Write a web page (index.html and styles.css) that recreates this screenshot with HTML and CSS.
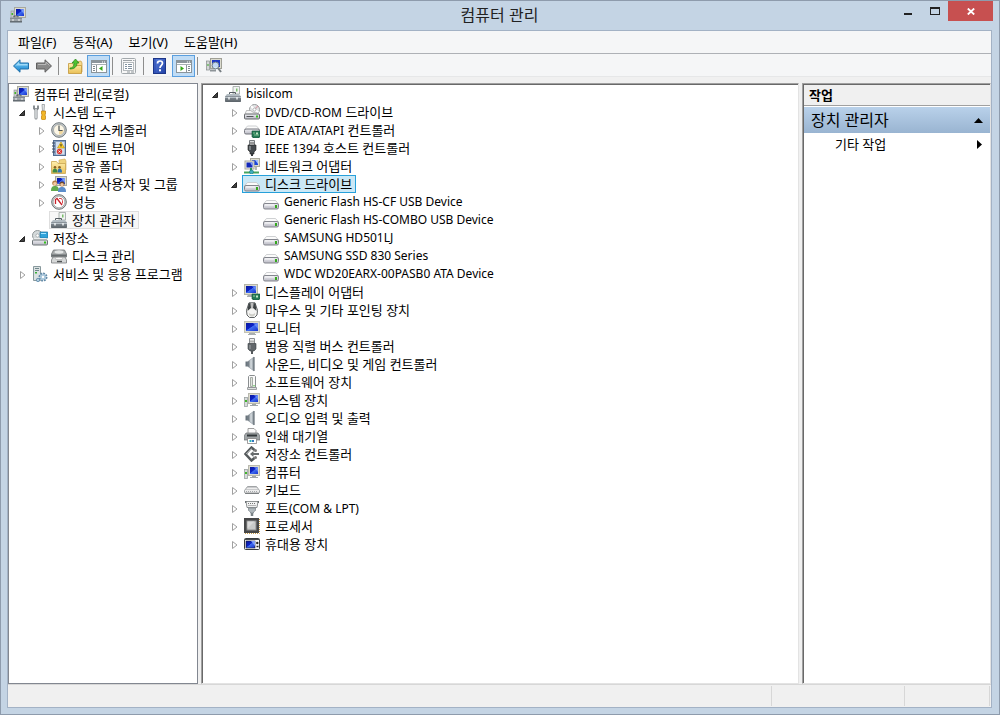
FILE: index.html
```html
<!DOCTYPE html>
<html lang="ko">
<head>
<meta charset="utf-8">
<title>컴퓨터 관리</title>
<link rel="stylesheet" href="styles.css">
</head>
<body>
<svg class="sprite" aria-hidden="true">
  <defs>
    <linearGradient id="g-screen" x1="0" y1="0" x2="1" y2="1">
      <stop offset="0" stop-color="#0a1a9c"/><stop offset=".45" stop-color="#0c22c8"/><stop offset=".5" stop-color="#3f6df0"/><stop offset="1" stop-color="#1a35d0"/>
    </linearGradient>
    <linearGradient id="g-metal" x1="0" y1="0" x2="0" y2="1"><stop offset="0" stop-color="#eeeef2"/><stop offset="1" stop-color="#b9b9c3"/></linearGradient>
    <linearGradient id="g-dark" x1="0" y1="0" x2="0" y2="1"><stop offset="0" stop-color="#8f979e"/><stop offset="1" stop-color="#5a6268"/></linearGradient>
    <linearGradient id="g-folder" x1="0" y1="0" x2="0" y2="1"><stop offset="0" stop-color="#fff0b0"/><stop offset="1" stop-color="#e9bf55"/></linearGradient>
    <linearGradient id="g-blue" x1="0" y1="0" x2="0" y2="1"><stop offset="0" stop-color="#7fd0f8"/><stop offset="1" stop-color="#1583cf"/></linearGradient>
    <linearGradient id="g-speaker" x1="0" y1="0" x2="1" y2="0"><stop offset="0" stop-color="#59636b"/><stop offset=".5" stop-color="#dbe1e5"/><stop offset="1" stop-color="#77828a"/></linearGradient>
    <linearGradient id="g-help" x1="0" y1="0" x2="1" y2="1"><stop offset="0" stop-color="#5b80dc"/><stop offset="1" stop-color="#1e3fa5"/></linearGradient>
  </defs>

  <symbol id="i-monitor" viewBox="0 0 16 16">
    <path d="M5 12h6v2h1v1H4v-1h1z" fill="#a9aeb0"/>
    <rect x=".5" y="1.500" width="15" height="11" fill="#dcdccf" stroke="#c3c3b6"/>
    <rect x="2" y="3" width="12" height="8" fill="url(#g-screen)"/>
    <path d="M9 3h5v6z" fill="#7fa0fa" opacity=".6"/>
  </symbol>
  <symbol id="i-computer" viewBox="0 0 16 16">
    <rect x=".5" y="5.500" width="3" height="9" fill="#d9dcdc" stroke="#9ba2a2" stroke-width=".8"/>
    <rect x="1" y="8" width="2" height="2" fill="#42b52a"/>
    <path d="M8 11h4v2h2v1H6v-1h2z" fill="#a0a6a8"/>
    <rect x="4.500" y="1.500" width="11" height="10" fill="#dcdccf" stroke="#b9b9ae"/>
    <rect x="6" y="3" width="8" height="7" fill="url(#g-screen)"/>
    <path d="M10 3h4v5z" fill="#7fa0fa" opacity=".6"/>
  </symbol>
  <symbol id="i-manage" viewBox="0 0 16 16">
    <rect x="1" y="4" width="3" height="8" fill="#c7cbcb" stroke="#8a9090" stroke-width=".6"/>
    <rect x="1.500" y="6" width="1.500" height="2" fill="#42b52a"/>
    <rect x="4.500" y=".5" width="11" height="10" fill="#dcdccf" stroke="#a8a89e"/>
    <rect x="6" y="2" width="8" height="7" fill="url(#g-screen)"/>
    <path d="M10 2h4v5z" fill="#8fb0ff" opacity=".7"/>
    <path d="M4 10.500V9h4v1.500" fill="none" stroke="#50575c"/>
    <rect x="0" y="10.500" width="12" height="5" rx=".5" fill="url(#g-dark)"/>
    <path d="M0 13h12" stroke="#dadfe2" stroke-width=".8"/>
    <path d="M3 12v2M9 12v2" stroke="#f3f3f3"/>
  </symbol>
  <symbol id="i-toolbox" viewBox="0 0 16 16">
    <path d="M8 8V.5h6.500V8z" fill="#f1f3f2" stroke="#9ba2a0" stroke-width=".8"/>
    <rect x="11" y="2.500" width="1.500" height="3" fill="#7dbf6c"/>
    <path d="M4.500 8.500V6.500h6v2" fill="none" stroke="#555d63"/>
    <path d="M2 8h12l2 2.500H0z" fill="#b3bcc2"/>
    <rect x="0" y="10" width="16" height="6" rx=".7" fill="url(#g-dark)"/>
    <path d="M0 11.500h16" stroke="#c5ced4" stroke-width=".8"/>
    <path d="M4 11v2.500M12 11v2.500" stroke="#eef1f2" stroke-width="1.500"/>
  </symbol>
  <symbol id="i-tools" viewBox="0 0 16 16">
    <path d="M2 1.500v3l2 1.500 2-1.500v-3" fill="none" stroke="#7d8387" stroke-width="1.800"/>
    <path d="M4 5.500V14" stroke="#80868a" stroke-width="3" stroke-linecap="round"/>
    <path d="M4 5.500V14" stroke="#e9ebec" stroke-width="1.400" stroke-linecap="round"/>
    <path d="M10 .5h2.500L12 7h-1.500z" fill="#e9ebec" stroke="#888e91" stroke-width=".7"/>
    <path d="M9.500 7h4v3l-.7 1 .7 1v3l-1 1h-2l-1-1v-3l.7-1-.7-1z" fill="#f2b727" stroke="#bd7c0b" stroke-width=".7"/>
  </symbol>
  <symbol id="i-clock" viewBox="0 0 16 16">
    <circle cx="8" cy="8" r="7.300" fill="#c5cacc" stroke="#70787b"/>
    <circle cx="8" cy="8" r="5.500" fill="#fdf7e6" stroke="#92989a" stroke-width=".7"/>
    <path d="M8 8h4.500A4.500 4.500 0 0 1 8 12.500z" fill="#efd79d"/>
    <path d="M8 3.500V8.500h3.500" fill="none" stroke="#4e5558" stroke-width="1.200"/>
  </symbol>
  <symbol id="i-event" viewBox="0 0 16 16">
    <rect x="2.500" y=".5" width="12" height="15" fill="#8aa2c3" stroke="#516c93"/>
    <rect x="5" y="2" width="8.500" height="12.500" fill="#d5e0ef"/>
    <path d="M1 3h3M1 6h3M1 9h3M1 12h3" stroke="#404d60"/>
    <path d="M10 2l3.500 6h-7z" fill="#ffd22e" stroke="#b98d00" stroke-width=".6"/>
    <path d="M10 4v2.500" stroke="#222"/>
    <circle cx="8.500" cy="11.500" r="2.700" fill="#dc3a36"/>
    <path d="M7.500 10.500l2 2m0-2l-2 2" stroke="#fff" stroke-width=".8"/>
  </symbol>
  <symbol id="i-share" viewBox="0 0 16 16">
    <path d="M8 2l6-1 1 2v9H8z" fill="#f0d47f" stroke="#c9a651" stroke-width=".6"/>
    <path d="M.5 3.500h5l1.500 2h7.500v10H.5z" fill="url(#g-folder)" stroke="#c9a651" stroke-width=".8"/>
    <circle cx="4" cy="9.300" r="1.300" fill="#8b6023"/><circle cx="8.500" cy="9.300" r="1.300" fill="#8b6023"/>
    <path d="M1.500 14.500c0-3 1-4 2.500-4s2.300 1 2.300 4z" fill="#3f8a44"/>
    <path d="M6.500 14.500c0-3 .8-4 2.200-4s2.300 1 2.300 4z" fill="#2f75b0"/>
  </symbol>
  <symbol id="i-users" viewBox="0 0 16 16">
    <rect x="4.500" y=".5" width="11" height="9" fill="#dcdccf" stroke="#a8a89e"/>
    <rect x="6" y="2" width="8" height="6" fill="url(#g-screen)"/>
    <path d="M10 2h4v5z" fill="#8fb0ff" opacity=".7"/>
    <circle cx="3.800" cy="7" r="2.600" fill="#b57d46"/><circle cx="4" cy="7.700" r="1.800" fill="#f1c9a2"/>
    <path d="M0 15c0-4 1.500-5 4-5s4 1 4 5z" fill="#61a94e"/>
    <circle cx="11" cy="8" r="2.500" fill="#6f4a2b"/><circle cx="11" cy="8.800" r="1.800" fill="#efc59e"/>
    <path d="M7 16c0-4 1.500-5 4-5s4 1 4 5z" fill="#5c8dcb"/>
  </symbol>
  <symbol id="i-perf" viewBox="0 0 16 16">
    <circle cx="8" cy="8" r="7.300" fill="#d2d4d5" stroke="#6b7173"/>
    <circle cx="8" cy="8" r="5.800" fill="#fff" stroke="#8b9092" stroke-width=".6"/>
    <path d="M4.500 10V5.500L6 4.500l5 6.500" fill="none" stroke="#c9222b" stroke-width="1.300"/>
    <path d="M8 4.500h2.500l1 2v3" fill="none" stroke="#d9484e"/>
  </symbol>
  <symbol id="i-storage" viewBox="0 0 16 16">
    <circle cx="5.500" cy="5.500" r="5" fill="#d5dadb" stroke="#8e9697"/>
    <circle cx="5.500" cy="5.500" r="1.600" fill="#fff" stroke="#8e9697" stroke-width=".6"/>
    <rect x="8" y="2" width="8" height="6" rx=".7" fill="#30a3da" stroke="#176b98" stroke-width=".7"/>
    <path d="M9 3.500h5" stroke="#a7e4ff"/>
    <path d="M2 8h12l2 2.500H0z" fill="#eceeee"/>
    <rect x=".5" y="10" width="15" height="5" rx="1" fill="url(#g-metal)" stroke="#6c7477"/>
    <rect x="12" y="11.500" width="2" height="2" fill="#32c21b"/>
  </symbol>
  <symbol id="i-diskmgmt" viewBox="0 0 16 16">
    <path d="M2.500 2h11l2 4v3H.5V6z" fill="#a9acad" stroke="#707476" stroke-width=".8"/>
    <ellipse cx="8" cy="4" rx="4.500" ry="1.700" fill="#e3e5e5"/>
    <path d="M.5 6.500h15v2H.5z" fill="#676c6e"/>
    <path d="M2 9h12l1.500 3v3H.5v-3z" fill="#d6d8d8" stroke="#787c7e" stroke-width=".8"/>
    <ellipse cx="8" cy="10.500" rx="4" ry="1.200" fill="#f9f9f9" stroke="#999" stroke-width=".5"/>
    <path d="M6 13.500h5" stroke="#4f5355" stroke-width="1.400"/>
  </symbol>
  <symbol id="i-services" viewBox="0 0 16 16">
    <path d="M1.500.5h7v14h-7z" fill="#dbe1e2" stroke="#88999d"/>
    <path d="M3 2.500h4M3 4.500h4" stroke="#70878b"/><rect x="3" y="6" width="2" height="1.500" fill="#38af38"/>
    <circle cx="11" cy="11" r="3.500" fill="#d6e6f0" stroke="#628aa8" stroke-width="2" stroke-dasharray="1.800 .9"/>
    <circle cx="11" cy="11" r="2.800" fill="#a9c7dc"/><circle cx="11" cy="11" r="1.200" fill="#fff"/>
    <circle cx="6" cy="14" r="1.700" fill="#aecbdd" stroke="#608aaa" stroke-width=".8"/>
  </symbol>
  <symbol id="i-drive" viewBox="0 0 16 16">
    <path d="M3.500 6.500h9l3 3.500H.5z" fill="#fbfbfb" stroke="#c3c5c8" stroke-width=".8"/>
    <rect x=".5" y="9.500" width="15" height="5.500" rx="1.500" fill="url(#g-metal)" stroke="#84868e"/>
    <path d="M2 11h9" stroke="#fff" stroke-width=".8"/>
    <rect x="12" y="11" width="2" height="3" fill="#34a81d"/>
  </symbol>
  <symbol id="i-dvd" viewBox="0 0 16 16">
    <circle cx="10.500" cy="5.500" r="5" fill="#e2e4e5" stroke="#96999b"/>
    <path d="M10.500 5.500L7 2M10.500 5.500l4 3" stroke="#fff" stroke-width="1.800"/>
    <path d="M10.500 5.500L14 2" stroke="#d9a7b1" stroke-width="1.300"/>
    <circle cx="10.500" cy="5.500" r="1.500" fill="#fff" stroke="#9b9ea0" stroke-width=".7"/>
    <path d="M2.500 6.500h4l3 2 4 .5 2 2H.5z" fill="#f5f5f5" stroke="#999" stroke-width=".6"/>
    <rect x=".5" y="10" width="15" height="5" rx="1" fill="url(#g-metal)" stroke="#65686b"/>
    <path d="M2.500 12.500h7" stroke="#54575a"/><rect x="12" y="11.500" width="2" height="2" fill="#34bf1d"/>
  </symbol>
  <symbol id="i-ide" viewBox="0 0 16 16">
    <path d="M3.500 4h9l3 3.500H.5z" fill="#fbfbfb" stroke="#c3c5c8" stroke-width=".8"/>
    <rect x=".5" y="7" width="15" height="5" rx="1.500" fill="url(#g-metal)" stroke="#73757d"/>
    <path d="M8 9h8v6h-1v1h-6v-1H8z" fill="#277b57" stroke="#115237" stroke-width=".6"/>
    <rect x="12" y="10.500" width="2" height="2" fill="#bfe5c3"/><path d="M9 11h2m-1 2h5" stroke="#92cf9d" stroke-width=".8"/>
  </symbol>
  <symbol id="i-ieee" viewBox="0 0 16 16">
    <path d="M5.500.5h5v5h-5z" fill="#d9dbdc" stroke="#777b7e"/>
    <path d="M7 2v2M9 2v2" stroke="#555"/>
    <path d="M4 5h8v5l-2 2v2H6v-2l-2-2z" fill="#454a4e" stroke="#222" stroke-width=".6"/>
    <path d="M6 6v4" stroke="#adb2b5"/><path d="M8 13v3" stroke="#33373a" stroke-width="2"/>
  </symbol>
  <symbol id="i-usb" viewBox="0 0 16 16">
    <path d="M5.500.5h5V6h-5z" fill="#edeeee" stroke="#8b8f92"/>
    <path d="M7 2.500v2M9 2.500v2" stroke="#777"/>
    <path d="M4 5.500h8V11l-2 2H6l-2-2z" fill="#62676b" stroke="#3b4043" stroke-width=".6"/>
    <path d="M6 7v4" stroke="#9fa4a7"/><path d="M8 13v3" stroke="#55595c" stroke-width="2"/>
  </symbol>
  <symbol id="i-network" viewBox="0 0 16 16">
    <rect x="6.500" y=".5" width="9" height="8" fill="#dcdccf" stroke="#aaaa9f"/><rect x="8" y="2" width="6" height="5" fill="#1c45d9"/>
    <path d="M11 2h3v4z" fill="#9cbcff"/>
    <rect x="1" y="3" width="9" height="8" fill="#ebebe2" stroke="#aaaa9f"/><rect x="2.500" y="4.500" width="6" height="5" fill="#1327b9"/>
    <path d="M6 4.500h2.500v4z" fill="#7d9efb"/>
    <path d="M7 10v4" stroke="#2b9a56" stroke-width="2"/><path d="M0 14.500h15" stroke="#47a55f" stroke-width="2"/>
    <circle cx="7.500" cy="14" r="2" fill="#43aebe" stroke="#167b7c" stroke-width=".6"/>
    <path d="M12 9v3" stroke="#b6b9b6" stroke-width="2"/>
  </symbol>
  <symbol id="i-display" viewBox="0 0 16 16">
    <path d="M4 11h4v2H3v-1z" fill="#a9aeb0"/>
    <rect x=".5" y=".5" width="13" height="10" fill="#dcdccf" stroke="#b5b5a8"/>
    <rect x="2" y="2" width="10" height="7" fill="url(#g-screen)"/><path d="M8 2h4v5z" fill="#7fa0fa" opacity=".6"/>
    <path d="M8 10h8v5h-1v1h-6v-1H8z" fill="#277b57" stroke="#115237" stroke-width=".6"/>
    <rect x="12" y="11.500" width="2" height="2" fill="#c1e9c5"/><path d="M9 12h2" stroke="#92cf9d"/>
  </symbol>
  <symbol id="i-mouse" viewBox="0 0 16 16">
    <path d="M5 .8h6l2.500 7.500L13 13l-2.500 2.500h-5L3 13l-.5-4.700z" fill="#f4f4f2" stroke="#5f6364"/>
    <path d="M4.500 1.500L6.500 1l.5 5-3.500 3zM11.500 1.500L9.500 1 9 6l3.500 3z" fill="#3d4244"/>
    <path d="M8 1.500v5" stroke="#aaa" stroke-width="1.500"/>
    <path d="M5 11q3 2.500 6 0v2L9 14.500H7L5 13z" fill="#cfcfc9"/>
  </symbol>
  <symbol id="i-sound" viewBox="0 0 16 16">
    <path d="M1.500 5.500h3v5h-3z" fill="#6a757d"/>
    <path d="M4 5.500L10 1v14l-6-4.500z" fill="url(#g-speaker)" stroke="#8c969d" stroke-width=".6"/>
    <path d="M10 1v14" stroke="#667077"/>
  </symbol>
  <symbol id="i-soft" viewBox="0 0 16 16">
    <path d="M4.500 2.500l1-1h5l1 1v11h-7z" fill="#fafafa" stroke="#8a8e90"/>
    <path d="M6.500 3.500v9h2v-9z" fill="#dfe5de" stroke="#8a9189" stroke-width=".7"/>
    <path d="M3.500 13.500h9v2h-9z" fill="#dfe0e0" stroke="#8a8e90" stroke-width=".8"/>
    <rect x="9.500" y="11" width="1" height="1.500" fill="#35b826"/>
  </symbol>
  <symbol id="i-printer" viewBox="0 0 16 16">
    <path d="M4 6V.5h6l2 2V6z" fill="#fafafa" stroke="#888" stroke-width=".8"/>
    <path d="M2 5h12l2 3v4H0V8z" fill="#a0a5a7" stroke="#6a6f71" stroke-width=".7"/>
    <path d="M3 7.500h10" stroke="#33383b" stroke-width="2"/>
    <path d="M3.500 10.500h9v5h-9z" fill="#fff" stroke="#777" stroke-width=".7"/>
    <path d="M5.500 12h2v2h-2z" fill="#2eb0ba"/><path d="M8 12h2v2H8z" fill="#3578c1"/>
  </symbol>
  <symbol id="i-controller" viewBox="0 0 16 16">
    <path d="M10.500 4L7.500 1.500 1.500 8l6 6.500 3-2.500" fill="none" stroke="#555a5c" stroke-width="2.500"/>
    <path d="M2 8l5.500-5.500" stroke="#a3a7a8"/>
    <path d="M8 8h7" stroke="#666b6d" stroke-width="2"/><path d="M6 8l3.500-3v6z" fill="#666b6d"/>
    <circle cx="11.500" cy="4.500" r="1.500" fill="#777"/><circle cx="11.500" cy="11.500" r="1.500" fill="#777"/>
  </symbol>
  <symbol id="i-keyboard" viewBox="0 0 16 16">
    <path d="M3.500 4.500h9l3 4v2l-1 1h-13l-1-1v-2z" fill="#ededed" stroke="#8b8f92" stroke-width=".8"/>
    <path d="M3.500 5.500h9M2.500 7.500h11.500M2 9.500h12" stroke="#a6a9ac" stroke-dasharray="1 1"/>
    <path d="M1 11.200h14" stroke="#6b6f72"/>
  </symbol>
  <symbol id="i-port" viewBox="0 0 16 16">
    <path d="M1 2h2M13 2h2" stroke="#6c7174" stroke-width="2"/>
    <path d="M2 1.500h12l-1 6H3z" fill="#f1f2f2" stroke="#73787a" stroke-width=".8"/>
    <path d="M4 3.500h8M4.500 5.500h7" stroke="#777" stroke-dasharray="1 1"/>
    <path d="M4.500 8h7v2.500l-2 1.500v1h-3v-1l-2-1.500z" fill="#b0b8bc" stroke="#788186" stroke-width=".7"/>
    <path d="M8 13v3" stroke="#798286" stroke-width="2.500"/>
  </symbol>
  <symbol id="i-cpu" viewBox="0 0 16 16">
    <path d="M1 15.500h14.500V1" fill="none" stroke="#c69c4b" stroke-dasharray="1 1"/>
    <rect x="0" y="0" width="15" height="15" fill="#464748"/>
    <rect x="3" y="3" width="9" height="9" fill="#c9cac9" stroke="#8d8e8d"/>
    <path d="M3.500 3.500h7l-7 7z" fill="#dadada"/>
  </symbol>
  <symbol id="i-portable" viewBox="0 0 16 16">
    <rect x=".5" y="2.500" width="15" height="11" rx="1" fill="#fbfbfb" stroke="#393d3f"/>
    <rect x="2" y="5" width="9" height="7" fill="url(#g-screen)" stroke="#15182d" stroke-width=".6"/>
    <path d="M7 5h4v5z" fill="#7d9dfa"/><path d="M1 3.500h14" stroke="#464a4c"/>
    <circle cx="13.300" cy="7" r="1.200" fill="#222"/><path d="M12.500 10.500h2" stroke="#222" stroke-width="1.500"/>
  </symbol>
  <symbol id="i-back" viewBox="0 0 16 16">
    <path d="M.5 8L7 1.800V5h8.500v6H7v3.200z" fill="url(#g-blue)" stroke="#1f6fa8"/>
    <path d="M2 8l4-3.800V6h8.500v1.500H3z" fill="#bce9ff" opacity=".7"/>
  </symbol>
  <symbol id="i-forward" viewBox="0 0 16 16">
    <path d="M15.500 8L9 1.800V5H.5v6H9v3.200z" fill="#898989" stroke="#606060"/>
    <path d="M2 6.500h8V4l3.500 3.500" fill="none" stroke="#b9b9b9"/>
  </symbol>
  <symbol id="i-up" viewBox="0 0 16 16">
    <path d="M8 4l6-1 1 2v9H8z" fill="#f5d98a" stroke="#c59b3f" stroke-width=".7"/>
    <path d="M1.500 5.500h4l1.500 2h7.500v8h-13z" fill="url(#g-folder)" stroke="#c29638" stroke-width=".8"/>
    <path d="M3 10c3 0 4-2 4-5H5l3.500-4L12 5h-2c0 4-3 6-7 6z" fill="#4fc232" stroke="#278219" stroke-width=".7"/>
  </symbol>
  <symbol id="i-panel" viewBox="0 0 16 16">
    <rect x=".5" y="2.500" width="15" height="12" fill="#fff" stroke="#8b959b"/>
    <path d="M1 3h14v2H1z" fill="#8b959c"/><path d="M11 4h1m1 0h1" stroke="#fff"/>
    <path d="M1 6.500h14" stroke="#a8b0b5"/>
    <path d="M5.500 7v7" stroke="#8b959b"/><path d="M2 8.500h2M2 10.500h2M2 12.500h2" stroke="#7d8890"/>
    <path d="M11.500 8v5L8 10.500z" fill="#35a718"/>
  </symbol>
  <symbol id="i-actions" viewBox="0 0 16 16">
    <rect x=".5" y="2.500" width="15" height="12" fill="#fff" stroke="#8b959b"/>
    <path d="M1 3h14v2H1z" fill="#8b959c"/><path d="M11 4h1m1 0h1" stroke="#fff"/>
    <path d="M1 6.500h14" stroke="#a8b0b5"/>
    <path d="M10.500 7v7" stroke="#8b959b"/><path d="M12 8.500h2M12 10.500h2M12 12.500h2" stroke="#7d8890"/>
    <path d="M4.500 8v5L8 10.500z" fill="#35a718"/>
  </symbol>
  <symbol id="i-props" viewBox="0 0 16 16">
    <rect x=".5" y=".5" width="14" height="15" rx="1" fill="#f7f7f7" stroke="#a2a8ac"/>
    <path d="M2 2.500h9M12 2.500h1.500" stroke="#9ca2a6"/>
    <rect x="2.500" y="4.500" width="10" height="8" fill="#fff" stroke="#a5abae" stroke-width=".8"/>
    <path d="M4 6.500h2M7 6.500h4M4 8.500h2M7 8.500h4M4 10.500h2M7 10.500h4" stroke="#8292a0"/>
    <path d="M6 14h3m1 0h3" stroke="#8d959a"/>
  </symbol>
  <symbol id="i-help" viewBox="0 0 16 16">
    <rect x="1.500" y=".5" width="12" height="15" fill="url(#g-help)" stroke="#1c3688"/>
    <path d="M3 1v14" stroke="#2a4bb0"/>
    <path d="M5.500 5.500C5.500 3.500 6.800 3 8 3c1.500 0 2.500 1 2.500 2.300C10.500 7.300 8 7.300 8 10" fill="none" stroke="#fff" stroke-width="1.700"/>
    <rect x="7" y="11.300" width="2" height="2" fill="#fff"/>
  </symbol>
  <symbol id="i-scan" viewBox="0 0 16 16">
    <rect x=".5" y="3" width="3" height="9" fill="#d5d8d8" stroke="#858b8b" stroke-width=".7"/><path d="M1 7h2" stroke="#36a925"/>
    <rect x="4.500" y=".5" width="11" height="10" fill="#dcdccf" stroke="#a0a096"/>
    <rect x="6" y="2" width="8" height="7" fill="#1f3ac4"/><path d="M4 12.500h6" stroke="#8d9498" stroke-width="2"/>
    <circle cx="9.500" cy="7.500" r="3.400" fill="#d4eafa" fill-opacity=".9" stroke="#74818c"/>
    <path d="M12 10l3 4" stroke="#777e83" stroke-width="2"/>
  </symbol>
  <symbol id="i-open" viewBox="0 0 8 8"><path d="M6.500 1.500v5h-5z" fill="#404040" stroke="#262626"/></symbol>
  <symbol id="i-closed" viewBox="0 0 8 8"><path d="M2.500.5L7 4 2.500 7.500z" fill="#fff" stroke="#a0a0a0"/></symbol>
</svg>

<div class="window">
  <header class="titlebar">
    <svg class="icon titlebar-icon"><use href="#i-manage"/></svg>
    <h1 class="title">컴퓨터 관리</h1>
    <div class="window-controls">
      <button class="win-btn" aria-label="최소화"><svg width="10" height="10"><path d="M1 7h8v2H1z" fill="#222"/></svg></button>
      <button class="win-btn" aria-label="최대화"><svg width="10" height="8"><path d="M0 0h10v8H0zM1 2v5h8V2z" fill="#222" fill-rule="evenodd"/></svg></button>
      <button class="win-btn win-close" aria-label="닫기"><svg width="8" height="7"><path d="M.8.5l6.400 6M7.200.5l-6.400 6" stroke="#fff" stroke-width="1.800"/></svg></button>
    </div>
  </header>

  <div class="client">
    <nav class="menubar" aria-label="메뉴">
      <button class="menu">파일(F)</button>
      <button class="menu">동작(A)</button>
      <button class="menu">보기(V)</button>
      <button class="menu">도움말(H)</button>
    </nav>

    <div class="toolbar" role="toolbar" aria-label="도구 모음">
      <button class="tool" aria-label="뒤로"><svg class="icon"><use href="#i-back"/></svg></button>
      <button class="tool" aria-label="앞으로"><svg class="icon"><use href="#i-forward"/></svg></button>
      <span class="separator"></span>
      <button class="tool" aria-label="한 수준 위로"><svg class="icon"><use href="#i-up"/></svg></button>
      <button class="tool pressed" aria-label="콘솔 트리 표시" aria-pressed="true"><svg class="icon"><use href="#i-panel"/></svg></button>
      <span class="separator"></span>
      <button class="tool" aria-label="속성"><svg class="icon"><use href="#i-props"/></svg></button>
      <span class="separator"></span>
      <button class="tool" aria-label="도움말"><svg class="icon"><use href="#i-help"/></svg></button>
      <button class="tool pressed" aria-label="작업 창 표시" aria-pressed="true"><svg class="icon"><use href="#i-actions"/></svg></button>
      <span class="separator"></span>
      <button class="tool" aria-label="하드웨어 변경 사항 검색"><svg class="icon"><use href="#i-scan"/></svg></button>
    </div>

    <main class="panes">
      <nav class="pane console-pane" aria-label="콘솔 트리">
        <button class="node root-node"><svg class="icon"><use href="#i-manage"/></svg>컴퓨터 관리(로컬)</button>
        <ul class="tree console-tree">
          <li>
            <div class="row"><button class="twisty" aria-label="접기"><svg><use href="#i-open"/></svg></button><button class="node"><svg class="icon"><use href="#i-tools"/></svg>시스템 도구</button></div>
            <ul class="tree branch">
              <li class="row"><button class="twisty" aria-label="펼치기"><svg><use href="#i-closed"/></svg></button><button class="node"><svg class="icon"><use href="#i-clock"/></svg>작업 스케줄러</button></li>
              <li class="row"><button class="twisty" aria-label="펼치기"><svg><use href="#i-closed"/></svg></button><button class="node"><svg class="icon"><use href="#i-event"/></svg>이벤트 뷰어</button></li>
              <li class="row"><button class="twisty" aria-label="펼치기"><svg><use href="#i-closed"/></svg></button><button class="node"><svg class="icon"><use href="#i-share"/></svg>공유 폴더</button></li>
              <li class="row"><button class="twisty" aria-label="펼치기"><svg><use href="#i-closed"/></svg></button><button class="node"><svg class="icon"><use href="#i-users"/></svg>로컬 사용자 및 그룹</button></li>
              <li class="row"><button class="twisty" aria-label="펼치기"><svg><use href="#i-closed"/></svg></button><button class="node"><svg class="icon"><use href="#i-perf"/></svg>성능</button></li>
              <li class="row leaf"><button class="node current"><svg class="icon"><use href="#i-toolbox"/></svg>장치 관리자</button></li>
            </ul>
          </li>
          <li>
            <div class="row"><button class="twisty" aria-label="접기"><svg><use href="#i-open"/></svg></button><button class="node"><svg class="icon"><use href="#i-storage"/></svg>저장소</button></div>
            <ul class="tree branch">
              <li class="row leaf"><button class="node"><svg class="icon"><use href="#i-diskmgmt"/></svg>디스크 관리</button></li>
            </ul>
          </li>
          <li class="row"><button class="twisty" aria-label="펼치기"><svg><use href="#i-closed"/></svg></button><button class="node"><svg class="icon"><use href="#i-services"/></svg>서비스 및 응용 프로그램</button></li>
        </ul>
      </nav>

      <section class="pane device-pane" aria-label="장치">
        <ul class="tree device-tree">
          <li>
            <div class="row"><button class="twisty" aria-label="접기"><svg><use href="#i-open"/></svg></button><button class="node latin"><svg class="icon"><use href="#i-toolbox"/></svg>bisilcom</button></div>
            <ul class="tree branch">
              <li class="row"><button class="twisty" aria-label="펼치기"><svg><use href="#i-closed"/></svg></button><button class="node"><svg class="icon"><use href="#i-dvd"/></svg><span><span class="latin">DVD/CD-ROM</span> 드라이브</span></button></li>
              <li class="row"><button class="twisty" aria-label="펼치기"><svg><use href="#i-closed"/></svg></button><button class="node"><svg class="icon"><use href="#i-ide"/></svg><span><span class="latin">IDE ATA/ATAPI</span> 컨트롤러</span></button></li>
              <li class="row"><button class="twisty" aria-label="펼치기"><svg><use href="#i-closed"/></svg></button><button class="node"><svg class="icon"><use href="#i-ieee"/></svg><span><span class="latin">IEEE 1394</span> 호스트 컨트롤러</span></button></li>
              <li class="row"><button class="twisty" aria-label="펼치기"><svg><use href="#i-closed"/></svg></button><button class="node"><svg class="icon"><use href="#i-network"/></svg>네트워크 어댑터</button></li>
              <li>
                <div class="row"><button class="twisty" aria-label="접기"><svg><use href="#i-open"/></svg></button><button class="node selected"><svg class="icon"><use href="#i-drive"/></svg>디스크 드라이브</button></div>
                <ul class="tree branch latin">
                  <li class="row leaf"><button class="node"><svg class="icon"><use href="#i-drive"/></svg>Generic Flash HS-CF USB Device</button></li>
                  <li class="row leaf"><button class="node"><svg class="icon"><use href="#i-drive"/></svg>Generic Flash HS-COMBO USB Device</button></li>
                  <li class="row leaf"><button class="node"><svg class="icon"><use href="#i-drive"/></svg>SAMSUNG HD501LJ</button></li>
                  <li class="row leaf"><button class="node"><svg class="icon"><use href="#i-drive"/></svg>SAMSUNG SSD 830 Series</button></li>
                  <li class="row leaf"><button class="node"><svg class="icon"><use href="#i-drive"/></svg>WDC WD20EARX-00PASB0 ATA Device</button></li>
                </ul>
              </li>
              <li class="row"><button class="twisty" aria-label="펼치기"><svg><use href="#i-closed"/></svg></button><button class="node"><svg class="icon"><use href="#i-display"/></svg>디스플레이 어댑터</button></li>
              <li class="row"><button class="twisty" aria-label="펼치기"><svg><use href="#i-closed"/></svg></button><button class="node"><svg class="icon"><use href="#i-mouse"/></svg>마우스 및 기타 포인팅 장치</button></li>
              <li class="row"><button class="twisty" aria-label="펼치기"><svg><use href="#i-closed"/></svg></button><button class="node"><svg class="icon"><use href="#i-monitor"/></svg>모니터</button></li>
              <li class="row"><button class="twisty" aria-label="펼치기"><svg><use href="#i-closed"/></svg></button><button class="node"><svg class="icon"><use href="#i-usb"/></svg>범용 직렬 버스 컨트롤러</button></li>
              <li class="row"><button class="twisty" aria-label="펼치기"><svg><use href="#i-closed"/></svg></button><button class="node"><svg class="icon"><use href="#i-sound"/></svg>사운드, 비디오 및 게임 컨트롤러</button></li>
              <li class="row"><button class="twisty" aria-label="펼치기"><svg><use href="#i-closed"/></svg></button><button class="node"><svg class="icon"><use href="#i-soft"/></svg>소프트웨어 장치</button></li>
              <li class="row"><button class="twisty" aria-label="펼치기"><svg><use href="#i-closed"/></svg></button><button class="node"><svg class="icon"><use href="#i-computer"/></svg>시스템 장치</button></li>
              <li class="row"><button class="twisty" aria-label="펼치기"><svg><use href="#i-closed"/></svg></button><button class="node"><svg class="icon"><use href="#i-sound"/></svg>오디오 입력 및 출력</button></li>
              <li class="row"><button class="twisty" aria-label="펼치기"><svg><use href="#i-closed"/></svg></button><button class="node"><svg class="icon"><use href="#i-printer"/></svg>인쇄 대기열</button></li>
              <li class="row"><button class="twisty" aria-label="펼치기"><svg><use href="#i-closed"/></svg></button><button class="node"><svg class="icon"><use href="#i-controller"/></svg>저장소 컨트롤러</button></li>
              <li class="row"><button class="twisty" aria-label="펼치기"><svg><use href="#i-closed"/></svg></button><button class="node"><svg class="icon"><use href="#i-computer"/></svg>컴퓨터</button></li>
              <li class="row"><button class="twisty" aria-label="펼치기"><svg><use href="#i-closed"/></svg></button><button class="node"><svg class="icon"><use href="#i-keyboard"/></svg>키보드</button></li>
              <li class="row"><button class="twisty" aria-label="펼치기"><svg><use href="#i-closed"/></svg></button><button class="node"><svg class="icon"><use href="#i-port"/></svg><span>포트<span class="latin">(COM &amp; LPT)</span></span></button></li>
              <li class="row"><button class="twisty" aria-label="펼치기"><svg><use href="#i-closed"/></svg></button><button class="node"><svg class="icon"><use href="#i-cpu"/></svg>프로세서</button></li>
              <li class="row"><button class="twisty" aria-label="펼치기"><svg><use href="#i-closed"/></svg></button><button class="node"><svg class="icon"><use href="#i-portable"/></svg>휴대용 장치</button></li>
            </ul>
          </li>
        </ul>
      </section>

      <aside class="pane action-pane">
        <h2 class="action-title">작업</h2>
        <button class="action-group">장치 관리자<svg width="9" height="5"><path d="M4.500 0L9 5H0z"/></svg></button>
        <button class="action-item">기타 작업<svg width="5" height="9"><path d="M0 0l5 4.500L0 9z"/></svg></button>
      </aside>
    </main>

    <footer class="statusbar">
      <span class="status-main"></span>
      <span class="status-cell status-middle"></span>
      <span class="status-cell status-end"></span>
    </footer>
  </div>
</div>
</body>
</html>
```
FILE: styles.css
```css
* {
  box-sizing: border-box;
}

body {
  margin: 0;
  color: #000;
  font-family: "Noto Sans", "Noto Sans CJK KR", sans-serif;
  font-size: 13px;
  line-height: 18px;
}

button {
  margin: 0;
  padding: 0;
  border: 0;
  background: none;
  color: inherit;
  font: inherit;
  text-align: left;
  white-space: nowrap;
}

h1,
h2 {
  margin: 0;
  font-weight: 400;
}

.latin {
  font-size: 12px;
}

.sprite {
  position: absolute;
  width: 0;
  height: 0;
}

.icon {
  display: block;
  flex: none;
  width: 16px;
  height: 16px;
}

.window {
  display: flex;
  flex-direction: column;
  min-height: 100vh;
  padding: 0 7px 6px 6px;
  border: 1px solid #8e9bac;
  background: #c4d4e4;
}

/* Title bar */

.titlebar {
  display: grid;
  grid-template-columns: 1fr auto 1fr;
  align-items: start;
  height: 29px;
}

.titlebar-icon {
  margin: 6px 0 0 3px;
}

.title {
  padding-top: 2px;
  color: #222;
  font-size: 16px;
  line-height: 24px;
}

.window-controls {
  display: flex;
  justify-content: flex-end;
  margin-right: -1px;
}

.win-btn {
  display: flex;
  align-items: center;
  justify-content: center;
  width: 27px;
  height: 20px;
}

.win-close {
  width: 45px;
  background: #c75050;
}

/* Client area */

.client {
  display: flex;
  flex: 1;
  flex-direction: column;
  border: 1px solid #a3b2c5;
  background: #f0f0f0;
}

.menubar {
  display: flex;
  gap: 16px;
  height: 23px;
  padding: 2px 10px;
  border-bottom: 1px solid #aeb1b6;
  background: #f5f6f7;
}

.toolbar {
  display: flex;
  align-items: flex-start;
  height: 23px;
  padding: 1px 0 0 1px;
  border-bottom: 1px solid #e6e7e8;
  background: #f5f6f7;
}

.tool {
  display: flex;
  align-items: center;
  justify-content: center;
  width: 23px;
  height: 22px;
}

.pressed {
  margin: 0 -1px 0 1px;
  border: 1px solid #5a9fdf;
  background: #c0dcf5;
}

.separator {
  width: 1px;
  height: 18px;
  margin: 2px 4px 0 3px;
  background: #8d8d8d;
}

.panes {
  display: grid;
  flex: 1;
  grid-template-columns: 190px 1fr 189px;
  gap: 3px;
  padding-top: 6px;
}

.pane {
  background: #fff;
}

.console-pane {
  padding-top: 1px;
  border: 1px solid #828790;
}

.device-pane,
.action-pane {
  padding: 1px 0 0 1px;
  border: 1px solid;
  border-color: #a0a0a0 #e3e3e3 #e3e3e3 #a0a0a0;
  box-shadow: inset 1px 1px #696969;
}

/* Trees */

.tree {
  margin: 0;
  padding: 0;
  list-style: none;
}

.console-tree {
  padding-left: 5px;
}

.device-tree {
  padding-left: 4px;
}

.branch {
  padding-left: 19px;
}

.row {
  display: flex;
  height: 18px;
}

.leaf {
  padding-left: 16px;
}

.twisty {
  display: flex;
  align-items: center;
  justify-content: center;
  width: 16px;
  height: 18px;
  padding-top: 2px;
}

.twisty svg {
  width: 8px;
  height: 8px;
}

.node {
  display: flex;
  gap: 5px;
  height: 18px;
  padding: 0 3px 0 1px;
  border: 1px solid transparent;
  line-height: 16px;
}

.root-node {
  margin-left: 2px;
}

.current {
  border-color: #dedede;
  background: #f7f7f7;
}

.selected {
  border-color: #26a0da;
  background: #cbe8f6;
}

/* Action pane */

.action-title {
  padding: 0 5px;
  border-bottom: 1px solid #a0a0a0;
  background: #f0f0f0;
  font-size: 13px;
  font-weight: 700;
  line-height: 20px;
}

.action-group,
.action-item {
  display: flex;
  align-items: center;
  justify-content: space-between;
  width: 100%;
}

.action-group {
  height: 26px;
  margin-top: 1px;
  padding: 0 7px;
  background: linear-gradient(#b9d1ea, #99b4d1);
  font-size: 16px;
}

.action-item {
  height: 22px;
  padding: 0 8px 0 31px;
}

/* Status bar */

.statusbar {
  display: flex;
  height: 23px;
  padding: 1px 1px 1px 0;
  border-top: 1px solid #d7d7d7;
}

.status-main {
  flex: 1;
}

.status-cell {
  border-left: 1px solid #d7d7d7;
}

.status-middle {
  width: 133px;
}

.status-end {
  width: 86px;
  border-right: 1px solid #d7d7d7;
}
```
